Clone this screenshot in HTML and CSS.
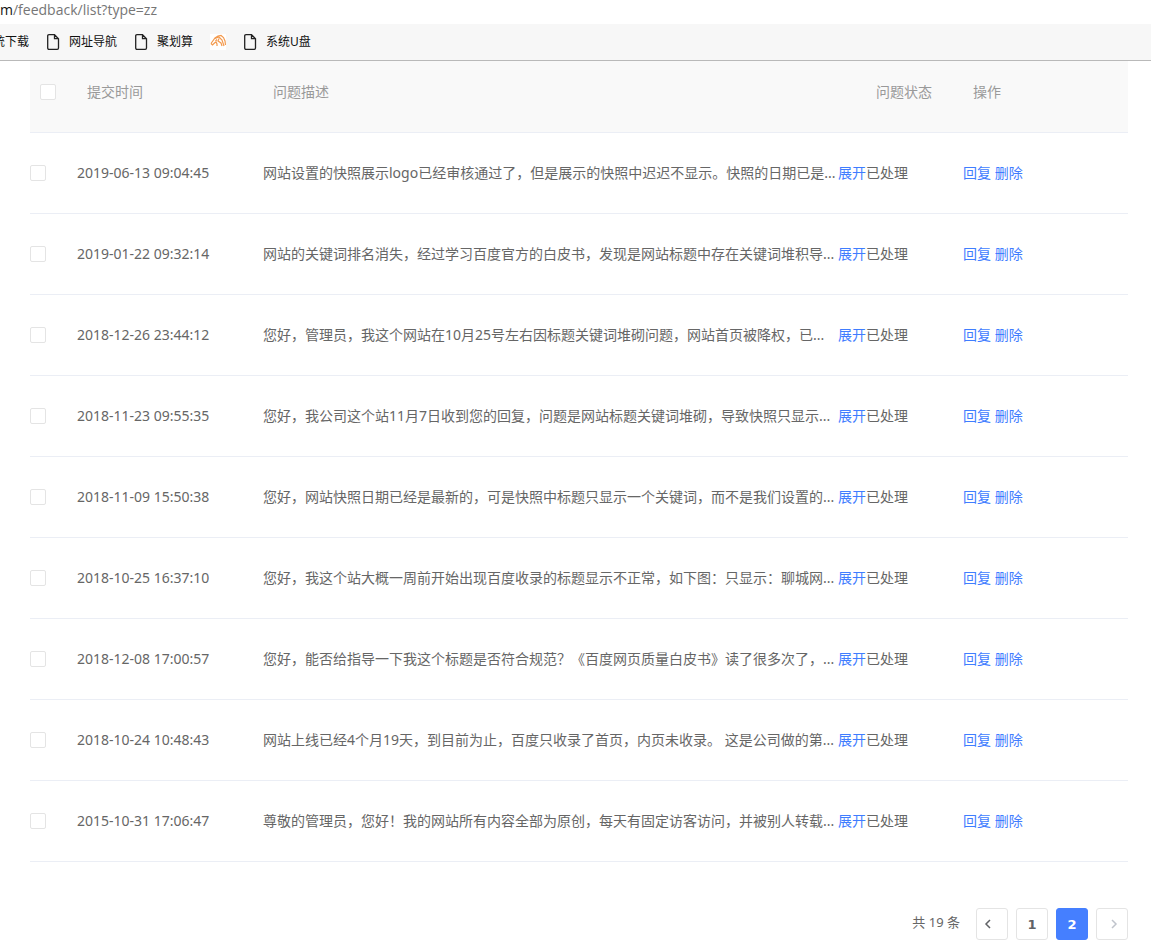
FILE: index.html
```html
<!DOCTYPE html>
<html lang="zh">
<head>
    <meta charset="UTF-8">
    <meta name="viewport" content="width=device-width, initial-scale=1.0">
    <title>问题反馈</title>
    <link rel="stylesheet" href="styles.css">
    <script src="list.js" defer></script>
</head>
<body>
    <header class="browser">
        <div class="address"><span class="host">m</span>/feedback/list?type=zz</div>
        <nav class="bookmarks">
            <a class="bookmark bookmark-cut" href="#"><span>统下载</span></a>
            <a class="bookmark" href="#">
                <svg class="file-icon" viewBox="0 0 14 16"><path d="M3 .7h5.500l4 4V14q0 1.300-1.300 1.300H3Q1.700 15.300 1.700 14V2Q1.700.7 3 .7zM8.500.7v4h4"/></svg>
                网址导航
            </a>
            <a class="bookmark" href="#">
                <svg class="file-icon" viewBox="0 0 14 16"><path d="M3 .7h5.500l4 4V14q0 1.300-1.300 1.300H3Q1.700 15.300 1.700 14V2Q1.700.7 3 .7zM8.500.7v4h4"/></svg>
                聚划算
            </a>
            <a class="bookmark" href="#" aria-label="书签">
                <svg class="horse-icon" viewBox="0 0 16 16">
                    <path d="M1 9.500L5 4l3-2 3-.5 2.500 2L15 7l.5 4M5 4.500L9 3l3 3 2 6M9 4.500L8 7l3 2 1 3M1 9.500L2.500 11l2-2L6 8l1 2v2M7 5.500L5.500 7"/>
                </svg>
            </a>
            <a class="bookmark" href="#">
                <svg class="file-icon" viewBox="0 0 14 16"><path d="M3 .7h5.500l4 4V14q0 1.300-1.300 1.300H3Q1.700 15.300 1.700 14V2Q1.700.7 3 .7zM8.500.7v4h4"/></svg>
                系统U盘
            </a>
        </nav>
    </header>

    <main class="container">
        <table class="feedback">
            <colgroup>
                <col class="col-check">
                <col class="col-time">
                <col>
                <col class="col-status">
                <col class="col-action">
            </colgroup>
            <thead>
                <tr>
                    <th><input type="checkbox" class="check" id="check-all" aria-label="全选"></th>
                    <th>提交时间</th>
                    <th>问题描述</th>
                    <th>问题状态</th>
                    <th>操作</th>
                </tr>
            </thead>
            <tbody id="feedback-rows"></tbody>
        </table>

        <div class="pagination">
            <span class="total">共 19 条</span>
            <button type="button" class="page" aria-label="上一页">
                <svg class="arrow arrow-prev" viewBox="0 0 12 12"><path d="M8 2L4 6l4 4"/></svg>
            </button>
            <button type="button" class="page">1</button>
            <button type="button" class="page active">2</button>
            <button type="button" class="page" aria-label="下一页" disabled>
                <svg class="arrow arrow-next" viewBox="0 0 12 12"><path d="M4 2l4 4-4 4"/></svg>
            </button>
        </div>
    </main>
</body>
</html>
```
FILE: styles.css
```css
* {
    box-sizing: border-box;
}
body {
    margin: 0;
    background: #fff;
    color: #666;
    font-family: "Noto Sans", "Noto Sans CJK SC", sans-serif;
    font-size: 14px;
    line-height: 20px;
    text-spacing-trim: space-all;
}
a {
    color: #3f7dff;
    text-decoration: none;
}

/* 浏览器顶部 */
.address {
    height: 24px;
    line-height: 19px;
    font-family: "Open Sans", sans-serif;
    color: #767676;
}
.host {
    color: #111;
}
.bookmarks {
    display: flex;
    align-items: center;
    gap: 17px;
    height: 37px;
    background: #f7f7f7;
    border-bottom: 1px solid #b9b9b9;
    overflow: hidden;
}
.bookmark {
    display: flex;
    align-items: center;
    gap: 9px;
    color: #111;
    font-size: 12px;
    white-space: nowrap;
}
.bookmark-cut {
    width: 29px;
    justify-content: flex-end;
}
.file-icon {
    width: 14px;
    height: 16px;
    fill: none;
    stroke: #222;
    stroke-width: 1.3;
}
.horse-icon {
    width: 16px;
    height: 16px;
    background: #fff;
    fill: none;
    stroke: #f39a4e;
    stroke-width: 1.2;
}

/* 反馈列表 */
.container {
    padding: 0 23px 4px 30px;
}
.feedback {
    width: 100%;
    table-layout: fixed;
    border-collapse: separate;
    border-spacing: 0;
}
.col-check {
    width: 47px;
}
.col-time {
    width: 186px;
}
.col-status {
    width: 97px;
}
.col-action {
    width: 165px;
}
.feedback th {
    padding: 21px 0 30px 10px;
    background: #f9f9f9;
    border-bottom: 1px solid #ebeef5;
    color: #999;
    font-weight: normal;
    text-align: left;
}
.feedback td {
    padding: 30px 0;
    border-bottom: 1px solid #ebeef5;
    white-space: nowrap;
}
.check {
    appearance: none;
    display: block;
    width: 16px;
    height: 16px;
    margin: 0;
    background: #fff;
    border: 1px solid #e4e4e4;
    border-radius: 2px;
}
.check:checked {
    background: #457fff;
}
.desc {
    display: flex;
    justify-content: space-between;
}

/* 分页 */
.pagination {
    display: flex;
    justify-content: flex-end;
    gap: 8px;
    margin-top: 46px;
}
.total {
    margin-right: 8px;
    font-size: 13px;
    line-height: 28px;
}
.page {
    display: flex;
    align-items: center;
    justify-content: center;
    width: 32px;
    height: 32px;
    padding: 0;
    background: #fff;
    border: 1px solid #e4e4e4;
    border-radius: 3px;
    color: #606266;
    font-family: "DejaVu Sans", sans-serif;
    font-size: 13px;
    font-weight: bold;
}
.page.active {
    background: #457fff;
    border-color: #457fff;
    color: #fff;
}
.arrow {
    width: 12px;
    height: 12px;
    fill: none;
    stroke: currentColor;
    stroke-width: 1.5;
}
.arrow-prev {
    margin-right: 8px;
}
.arrow-next {
    margin-left: 4px;
}
.page:disabled {
    color: #c0c4cc;
}
```
FILE: list.js
```js
const list = [
    ['2019-06-13 09:04:45', '网站设置的快照展示logo已经审核通过了，但是展示的快照中迟迟不显示。快照的日期已是...'],
    ['2019-01-22 09:32:14', '网站的关键词排名消失，经过学习百度官方的白皮书，发现是网站标题中存在关键词堆积导...'],
    ['2018-12-26 23:44:12', '您好，管理员，我这个网站在10月25号左右因标题关键词堆砌问题，网站首页被降权，已...'],
    ['2018-11-23 09:55:35', '您好，我公司这个站11月7日收到您的回复，问题是网站标题关键词堆砌，导致快照只显示...'],
    ['2018-11-09 15:50:38', '您好，网站快照日期已经是最新的，可是快照中标题只显示一个关键词，而不是我们设置的...'],
    ['2018-10-25 16:37:10', '您好，我这个站大概一周前开始出现百度收录的标题显示不正常，如下图：只显示：聊城网...'],
    ['2018-12-08 17:00:57', '您好，能否给指导一下我这个标题是否符合规范？《百度网页质量白皮书》读了很多次了，...'],
    ['2018-10-24 10:48:43', '网站上线已经4个月19天，到目前为止，百度只收录了首页，内页未收录。 这是公司做的第...'],
    ['2015-10-31 17:06:47', '尊敬的管理员，您好！我的网站所有内容全部为原创，每天有固定访客访问，并被别人转载...']
];

const rows = document.getElementById('feedback-rows');
rows.innerHTML = list.map(([time, desc]) => `
    <tr>
        <td><input type="checkbox" class="check" aria-label="选择 ${time}"></td>
        <td>${time}</td>
        <td><div class="desc"><span>${desc}</span><a href="#">展开</a></div></td>
        <td>已处理</td>
        <td><a href="#">回复</a> <a href="#">删除</a></td>
    </tr>`).join('');

// 全选
document.getElementById('check-all').addEventListener('change', function (e) {
    rows.querySelectorAll('.check').forEach(box => {
        box.checked = e.target.checked;
    });
});
```
